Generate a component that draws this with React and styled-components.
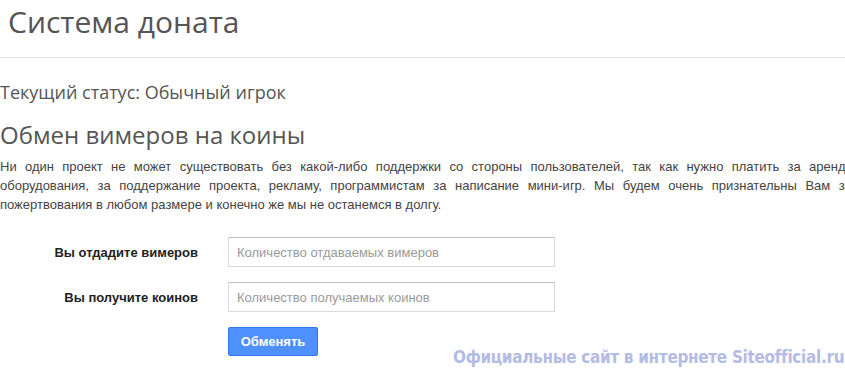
import React from "react"
import styled, { createGlobalStyle, css } from "styled-components"

const Global = createGlobalStyle`
  html, body {
    margin: 0;
    padding: 0;
    overflow: hidden;
    background: #fff;
  }
`

const Page = styled.main`
  position: relative;
  width: 845px;
  height: 369px;
  overflow: hidden;
`

const Header = styled.header`
  margin-top: 2px;
  padding: 0 0 15px 8px;
  border-bottom: 1px solid #e3e3e3;
`

const Title = styled.h1`
  margin: 0;
  font-family: "Open Sans", sans-serif;
  font-weight: 400;
  font-size: 30px;
  line-height: 40px;
  color: #555;
`

const Status = styled.div`
  margin-top: 22px;
  font-family: "Open Sans", sans-serif;
  font-size: 18px;
  line-height: 24px;
  color: #555;
`

const SubTitle = styled.h2`
  margin: 15px 0 0;
  font-family: "Open Sans", sans-serif;
  font-weight: 400;
  font-size: 24px;
  line-height: 32px;
  color: #555;
`

const Text = styled.div`
  width: 852px;
  margin-top: 6px;
  font-family: "Liberation Sans", Arial, sans-serif;
  font-size: 13px;
  line-height: 19px;
  color: #444;
`

const Line = styled.span`
  display: block;
  white-space: nowrap;
  ${({ $justify }) => $justify && css`
    text-align: justify;
    text-align-last: justify;
  `}
`

const Form = styled.form`
  display: grid;
  grid-template-columns: 198px 327px;
  column-gap: 30px;
  row-gap: 15px;
  align-items: center;
  margin-top: 23px;
`

const Label = styled.label`
  text-align: right;
  font-family: "Liberation Sans", Arial, sans-serif;
  font-weight: 700;
  font-size: 13px;
  color: #222;
`

const Input = styled.input`
  box-sizing: border-box;
  width: 327px;
  height: 30px;
  padding: 0 8px;
  border: 1px solid #d9d9d9;
  border-top-color: #c0c0c0;
  border-radius: 1px;
  font-family: "Liberation Sans", Arial, sans-serif;
  font-size: 13px;
  color: #333;
  outline: none;

  &::placeholder {
    color: #9a9a9a;
  }
`

const Button = styled.button`
  grid-column: 2;
  justify-self: start;
  box-sizing: border-box;
  width: 90px;
  height: 29px;
  padding: 0;
  background: #4d90fe;
  border: 1px solid #3079ed;
  border-radius: 2px;
  color: #fff;
  font-family: "Liberation Sans", Arial, sans-serif;
  font-weight: 700;
  font-size: 13px;
`

const Watermark = styled.div`
  position: absolute;
  right: 1px;
  top: 346px;
  transform: scaleX(0.94);
  transform-origin: right center;
  font-family: "DejaVu Sans Condensed", "DejaVu Sans", sans-serif;
  font-stretch: condensed;
  font-weight: 700;
  font-size: 18px;
  letter-spacing: -0.3px;
  color: #b3bce4;
  white-space: nowrap;
`

export default function App() {
  return (
    <Page>
      <Global />
      <Header>
        <Title>Система доната</Title>
      </Header>
      <Status>Текущий статус: Обычный игрок</Status>
      <SubTitle>Обмен вимеров на коины</SubTitle>
      <Text>
        <Line $justify>Ни один проект не может существовать без какой-либо поддержки со стороны пользователей, так как нужно платить за аренду</Line>
        <Line $justify>оборудования, за поддержание проекта, рекламу, программистам за написание мини-игр. Мы будем очень признательны Вам за</Line>
        <Line>пожертвования в любом размере и конечно же мы не останемся в долгу.</Line>
      </Text>
      <Form onSubmit={(e) => e.preventDefault()}>
        <Label>Вы отдадите вимеров</Label>
        <Input placeholder="Количество отдаваемых вимеров" />
        <Label>Вы получите коинов</Label>
        <Input placeholder="Количество получаемых коинов" />
        <Button type="submit">Обменять</Button>
      </Form>
      <Watermark>Официальные сайт в интернете Siteofficial.ru</Watermark>
    </Page>
  )
}
